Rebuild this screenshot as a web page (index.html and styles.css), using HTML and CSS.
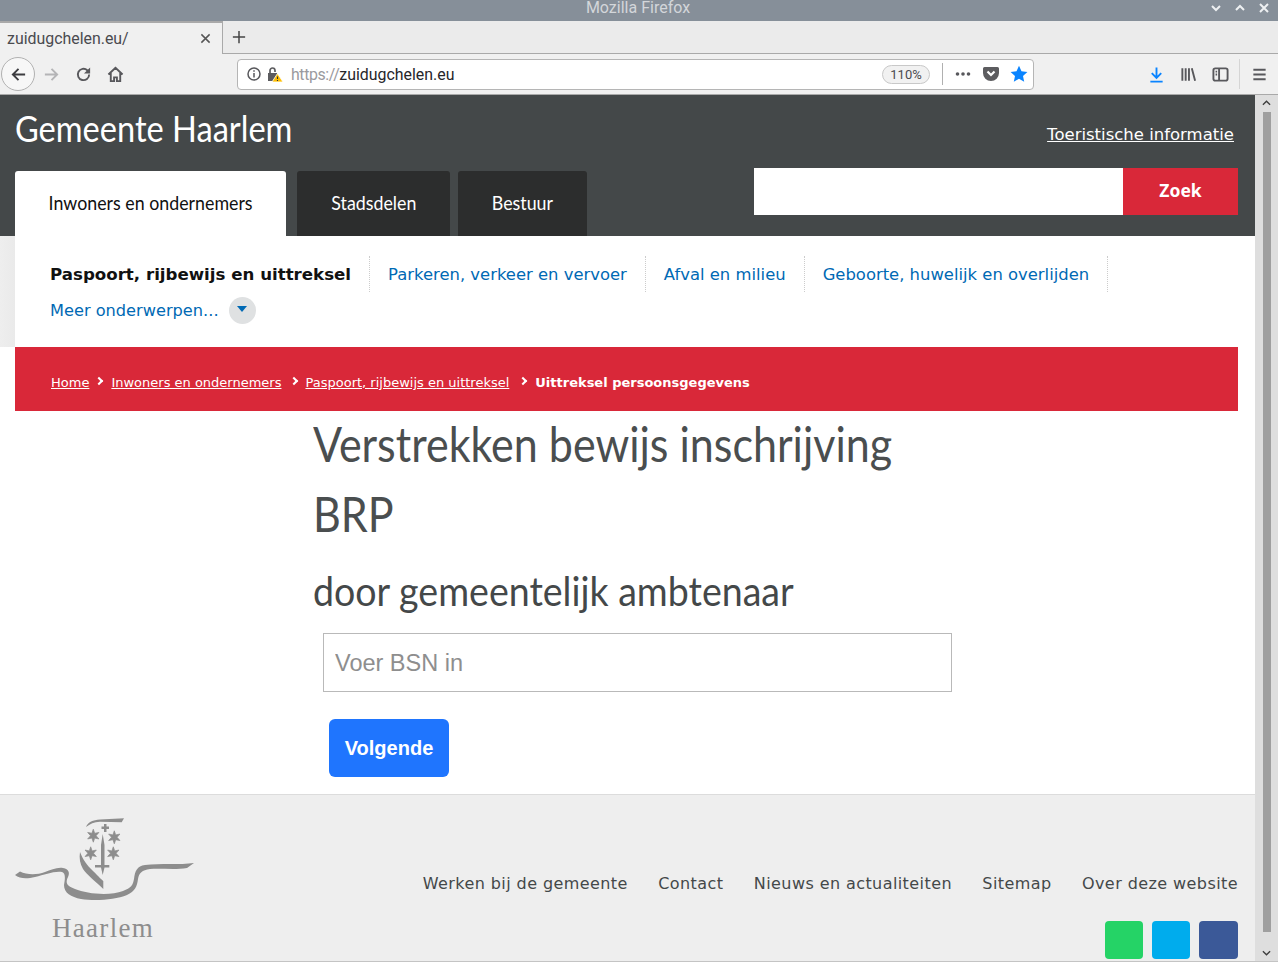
FILE: index.html
```html
<!DOCTYPE html>
<html lang="nl">
<head>
<meta charset="utf-8">
<title>Gemeente Haarlem</title>
<link rel="stylesheet" href="styles.css">
</head>
<body>
<div class="window">
  <div class="titlebar">
    <span class="titlebar-text">Mozilla Firefox</span>
    <div class="wm-buttons">
      <svg class="wm-icon" viewBox="0 0 12 12"><path d="M2 4l4 4 4-4"/></svg>
      <svg class="wm-icon" viewBox="0 0 12 12"><path d="M2 8l4-4 4 4"/></svg>
      <svg class="wm-icon" viewBox="0 0 12 12"><path d="M2 2l8 8M10 2l-8 8"/></svg>
    </div>
  </div>
  <div class="tabbar">
    <div class="tab">
      <span class="tab-title">zuidugchelen.eu/</span>
      <svg class="tab-close" viewBox="0 0 12 12"><path d="M1.500 1.500l9 9M10.500 1.500l-9 9"/></svg>
    </div>
    <svg class="newtab" viewBox="0 0 16 16"><path d="M8 1v14M1 8h14"/></svg>
  </div>
  <div class="navbar">
    <div class="back-btn">
      <svg class="tb-icon dark" viewBox="0 0 18 18"><path d="M16 9H3M9 3L3 9l6 6"/></svg>
    </div>
    <div class="slot"><svg class="tb-icon muted" viewBox="0 0 18 18"><path d="M2 9h13M9 3l6 6-6 6"/></svg></div>
    <div class="slot"><svg class="tb-icon gray" viewBox="0 0 18 18"><path d="M15 9a6 6 0 1 1-2-4.500L15 6"/><path class="fill" d="M16 1.500V8H9.500z"/></svg></div>
    <div class="slot"><svg class="tb-icon gray" viewBox="0 0 18 18"><path d="M1.500 9L9 2l7.500 7M4 7.500V16h3.500v-4h3v4H14V7.500"/></svg></div>
    <div class="urlbar">
      <svg class="info-icon" viewBox="0 0 14 14"><circle cx="7" cy="7" r="6"/><path d="M7 6v4.500M7 3.200v1.600"/></svg>
      <svg class="lock-icon" viewBox="0 0 16 16"><path class="lock-body" d="M1 7h9v8H1z"/><path class="lock-arc" d="M3 7V4.500a2.500 2.500 0 0 1 5 0V6"/><path class="warn" d="M10.500 7.500L16 16H5z"/><path class="warn-mark" d="M10.500 10.500v2.500M10.500 14v1"/></svg>
      <span class="url"><span class="url-scheme">https://</span>zuidugchelen.eu</span>
      <span class="zoom-pill">110%</span>
      <span class="url-sep"></span>
      <svg class="dots" viewBox="0 0 16 4"><circle cx="2.500" cy="2" r="1.800"/><circle cx="8" cy="2" r="1.800"/><circle cx="13.500" cy="2" r="1.800"/></svg>
      <svg class="pocket" viewBox="0 0 16 16"><path class="pocket-body" d="M1.500 1h13A1.500 1.500 0 0 1 16 2.500V7a8 8 0 0 1-16 0V2.500A1.500 1.500 0 0 1 1.500 1z"/><path class="pocket-mark" d="M4.500 5.500L8 9l3.500-3.500"/></svg>
      <svg class="star" viewBox="0 0 18 18"><path d="M9 .8l2.500 5.400 5.900.7-4.400 4 1.200 5.800L9 13.800l-5.200 2.900L5 10.900.6 6.900l5.900-.7z"/></svg>
    </div>
    <div class="slot download-slot"><svg class="tb-icon blue" viewBox="0 0 18 18"><path d="M9 1.500V12M4 7.500L9 12.500l5-5M2.500 16.500h13"/></svg></div>
    <div class="slot"><svg class="tb-icon gray" viewBox="0 0 18 18"><path d="M2.500 2.500v13M6 2.500v13M9.500 2.500v13M12.500 2.500l3.500 13"/></svg></div>
    <div class="slot"><svg class="tb-icon gray" viewBox="0 0 18 18"><rect x="1.500" y="2.500" width="15" height="13" rx="2"/><path d="M7.500 2.500v13M3.800 6h1.600M3.800 9h1.600"/></svg></div>
    <span class="nav-sep"></span>
    <div class="slot"><svg class="tb-icon gray" viewBox="0 0 18 18"><path d="M2.500 4h13M2.500 9h13M2.500 14h13"/></svg></div>
  </div>

  <div class="viewport">
    <div class="page">
      <header class="site-header">
        <div class="header-left">
          <div class="site-title">Gemeente Haarlem</div>
          <nav class="main-tabs">
            <a class="main-tab active tab-a"><span class="tab-label">Inwoners en ondernemers</span></a>
            <a class="main-tab tab-b"><span class="tab-label">Stadsdelen</span></a>
            <a class="main-tab tab-c"><span class="tab-label">Bestuur</span></a>
          </nav>
        </div>
        <div class="header-right">
          <a class="tourist-link">Toeristische informatie</a>
          <div class="search">
            <div class="search-input"></div>
            <div class="search-btn">Zoek</div>
          </div>
        </div>
      </header>

      <div class="subnav-wrap">
        <nav class="subnav">
          <a class="subnav-item current">Paspoort, rijbewijs en uittreksel</a>
          <a class="subnav-item">Parkeren, verkeer en vervoer</a>
          <a class="subnav-item">Afval en milieu</a>
          <a class="subnav-item">Geboorte, huwelijk en overlijden</a>
          <a class="subnav-more">Meer onderwerpen...<span class="more-circle"><span class="more-caret"></span></span></a>
        </nav>
      </div>

      <div class="breadcrumb-wrap">
        <div class="breadcrumb">
          <a class="crumb">Home</a><span class="crumb-sep c1"></span>
          <a class="crumb">Inwoners en ondernemers</a><span class="crumb-sep c2"></span>
          <a class="crumb">Paspoort, rijbewijs en uittreksel</a><span class="crumb-sep c3"></span>
          <strong class="crumb-current">Uittreksel persoonsgegevens</strong>
        </div>
      </div>

      <main class="content">
        <h1 class="page-title">Verstrekken bewijs inschrijving<br>BRP</h1>
        <h2 class="page-sub">door gemeentelijk ambtenaar</h2>
        <input class="bsn" type="text" placeholder="Voer BSN in">
        <button class="next" type="button">Volgende</button>
      </main>

      <footer class="site-footer">
        <div class="logo">
          <svg class="logo-mark" viewBox="0 0 180 90">
            <defs>
              <polygon id="logo-star" points="0,-6.500 1.400,-2.420 5.630,-3.250 2.800,0 5.630,3.250 1.400,2.420 0,6.500 -1.400,2.420 -5.630,3.250 -2.800,0 -5.630,-3.250 -1.400,-2.420"/>
            </defs>
            <path d="M0 60L5 56.500C12 60 22 60 30 57C36 55 42 52 48 53C54 54 55 58 53 62C50 68 52 71 60 74C72 79 95 81 108 76C116 73 118 70 119 64C120 56 122 51 130 50C145 48 165 50 179 48L172 53C160 55 145 53 135 54C127 55 124 58 123 64C122 72 120 76 112 80C100 85 80 86 66 84C56 82 49 78 49 70C50 65 51 58 47 57C38 56 30 60 20 62C12 64 5 64 0 60z"/>
            <path d="M71 12C73 7 78 5 85 4.500L109 3.300L106.700 7.300L85 6.800C79 7 75 9 71 12z"/>
            <path d="M65 37C68 45 72 50 78 56C84 62 87 65 88.300 66V74C80 66 72 60 68 54C65 49 64 43 65 37z"/>
            <path d="M87.700 19L89.500 30V50H94.300V52.500H89.500L87.700 60L86 52.500H80V50H86V30z"/>
            <path d="M89 9H91.500V11.500H94V14H91.500V17H89V14H86.500V11.500H89z"/>
            <use class="logo-star" href="#logo-star" x="78.300" y="20.700"/>
            <use class="logo-star" href="#logo-star" x="99.300" y="22.300"/>
            <use class="logo-star" href="#logo-star" x="75.700" y="38.300"/>
            <use class="logo-star" href="#logo-star" x="98.300" y="38.300"/>
          </svg>
          <div class="logo-text">Haarlem</div>
        </div>
        <div class="footer-right">
          <nav class="footer-links">
            <a>Werken bij de gemeente</a>
            <a>Contact</a>
            <a>Nieuws en actualiteiten</a>
            <a>Sitemap</a>
            <a>Over deze website</a>
          </nav>
          <div class="socials">
            <span class="social whatsapp"></span>
            <span class="social twitter"></span>
            <span class="social facebook"></span>
          </div>
        </div>
      </footer>
    </div>
    <div class="scrollbar">
      <svg class="sb-arrow" viewBox="0 0 10 6"><path d="M1 5l4-4 4 4"/></svg>
      <div class="sb-thumb"></div>
      <svg class="sb-arrow" viewBox="0 0 10 6"><path d="M1 1l4 4 4-4"/></svg>
    </div>
  </div>
</div>
</body>
</html>
```

FILE: styles.css
```css
* { box-sizing: border-box; }
html, body { margin: 0; padding: 0; height: 100%; overflow: hidden; }
body { font-family: "DejaVu Sans", sans-serif; background: #fff; }
svg { display: block; flex: none; }
a { text-decoration: none; color: inherit; }

.window { display: flex; flex-direction: column; width: 1278px; height: 962px; }

/* Title bar */
.titlebar { height: 21px; flex: none; background: #868f99; display: flex; align-items: center; justify-content: center; position: relative; padding-right: 2px; }
.titlebar-text { font: 16px/16px Roboto, sans-serif; color: #d3d6da; margin-top: -5px; }
.wm-buttons { position: absolute; right: 8px; top: 2px; display: flex; gap: 12px; }
.wm-icon { width: 12px; height: 12px; fill: none; stroke: #eef0f2; stroke-width: 2; }

/* Tabs */
.tabbar { height: 33px; flex: none; background: #ebebeb; display: flex; align-items: center; border-bottom: 1px solid #a9a9a9; }
.tab { width: 223px; height: 33px; align-self: flex-start; background: #f0f0f0; border-top: 2px solid #a9a9a9; border-right: 1px solid #a9a9a9; display: flex; align-items: center; justify-content: space-between; padding: 0 11px 0 7px; }
.tab-title { font: 15.900px/20px Roboto, sans-serif; color: #4a4a4f; }
.tab-close { width: 11px; height: 11px; fill: none; stroke: #555; stroke-width: 1.600; }
.newtab { width: 14px; height: 14px; margin: 0 0 0 9px; fill: none; stroke: #444; stroke-width: 1.700; }

/* Nav bar */
.navbar { height: 41px; flex: none; background: #f0f0f0; border-bottom: 1px solid #a9a9a9; display: flex; align-items: center; }
.back-btn { width: 34px; height: 34px; margin-left: 1px; border: 1px solid #b1b1b1; border-radius: 50%; background: #f7f7f7; display: flex; align-items: center; justify-content: center; }
.slot { width: 32px; height: 32px; display: flex; align-items: center; justify-content: center; }
.tb-icon { width: 17px; height: 17px; fill: none; stroke-width: 2; }
.tb-icon.dark { stroke: #3c3c40; }
.tb-icon.muted { stroke: #b4b4b6; }
.tb-icon.gray { stroke: #58585c; }
.tb-icon.blue { stroke: #0a84ff; }
.tb-icon .fill { fill: #58585c; stroke: none; }
.urlbar { width: 797px; height: 31px; margin-left: 106px; background: #fff; border: 1px solid #b5b5b5; border-radius: 4px; display: flex; align-items: center; padding-left: 9px; }
.info-icon { width: 14px; height: 14px; fill: none; stroke: #58585c; stroke-width: 1.500; }
.lock-icon { width: 16px; height: 16px; margin-left: 6px; fill: none; }
.lock-body { fill: #5c5c5f; }
.lock-arc { stroke: #5c5c5f; stroke-width: 1.700; }
.warn { fill: #ffbf00; stroke: #fff; stroke-width: .8; }
.warn-mark { stroke: #333; stroke-width: 1.100; }
.url { font: 15.900px/22px Roboto, sans-serif; color: #26262a; margin-left: 8px; width: 591px; padding-top: 1px; white-space: nowrap; }
.url-scheme { color: #9a9a9e; letter-spacing: -.4px; }
.zoom-pill { width: 48px; height: 19px; border: 1px solid #c8c8c8; border-radius: 10px; background: #f1f1f1; font: 13px/17px Roboto, sans-serif; color: #4a4a4f; text-align: center; }
.url-sep { width: 1px; height: 22px; background: #b0b0b0; margin-left: 12px; }
.dots { width: 16px; height: 4px; margin-left: 12px; fill: #58585c; }
.pocket { width: 16px; height: 16px; margin-left: 12px; }
.pocket-body { fill: #5c5c5f; }
.pocket-mark { fill: none; stroke: #fff; stroke-width: 2.200; }
.star { width: 18px; height: 18px; margin-left: 11px; fill: #0a84ff; }
.download-slot { margin-left: 106px; }
.nav-sep { width: 1px; height: 30px; background: #d5d5d5; margin: 0 3px; }

/* Viewport */
.viewport { flex: 1; display: flex; min-height: 0; border-bottom: 1px solid #c4c4c4; }
.page { flex: 1; min-width: 0; display: flex; flex-direction: column; overflow: hidden; background: #fff; }
.scrollbar { width: 23px; flex: none; background: #dedede; display: flex; flex-direction: column; align-items: center; }
.sb-arrow { width: 9px; height: 6px; margin: 5px 0; fill: none; stroke: #3d3d3d; stroke-width: 1.500; }
.sb-thumb { width: 8px; flex: 1; background: #9f9f9f; margin: 1px 0 13px; }

/* Header */
.site-header { height: 141px; flex: none; background: #444849; display: flex; justify-content: space-between; padding: 0 17px 0 15px; }
.header-left { display: flex; flex-direction: column; }
.site-title { height: 76px; font: 36px/66px Lato, sans-serif; color: #fff; white-space: nowrap; transform: scaleX(.905); transform-origin: left center; }
.main-tabs { display: flex; height: 65px; }
.main-tab { display: flex; align-items: center; justify-content: center; padding-bottom: 4px; border-radius: 3px 3px 0 0; font: 20px/24px Lato, sans-serif; color: #fff; background: #2c2d2d; white-space: nowrap; }
.tab-label { transform: scaleX(.89); }
.main-tab.active { background: #fff; color: #111; }
.tab-a { width: 271px; }
.tab-b { width: 153px; margin-left: 11px; }
.tab-c { width: 129px; margin-left: 8px; }
.header-right { display: flex; flex-direction: column; align-items: flex-end; padding-top: 28px; }
.tourist-link { font-size: 16.500px; line-height: 24px; color: #fff; text-decoration: underline; margin-right: 4px; }
.search { display: flex; width: 484px; height: 47px; margin-top: 21px; }
.search-input { flex: 1; background: #fff; }
.search-btn { width: 115px; background: #d92839; color: #fff; font: bold 17.500px/45px "Noto Sans", sans-serif; text-align: center; }

/* Sub nav */
.subnav-wrap { height: 111px; flex: none; padding-left: 15px; background: linear-gradient(90deg, #eee 0, #eaeaea 15px, #fff 15px); }
.subnav { display: flex; flex-wrap: wrap; align-content: flex-start; padding: 20px 0 0 35px; height: 111px; }
.subnav-item { height: 36px; line-height: 38px; font-size: 16.420px; color: #0069b4; padding: 0 18px; border-right: 1px dotted #ccc; white-space: nowrap; }
.subnav-item.current { font-weight: bold; font-size: 16.650px; color: #111; padding-left: 0; }
.subnav-more { width: 100%; height: 36px; display: flex; align-items: center; font-size: 16.200px; color: #0069b4; }
.more-circle { width: 27px; height: 27px; margin-left: 10px; border-radius: 50%; background: #dfe1e2; display: flex; align-items: center; justify-content: center; }
.more-caret { width: 0; height: 0; border: 5px solid transparent; border-top: 6px solid #0069b4; border-bottom: 0; margin-top: -2px; }

/* Breadcrumb */
.breadcrumb-wrap { height: 64px; flex: none; padding: 0 17px 0 15px; }
.breadcrumb { height: 64px; background: #d92839; padding: 7px 36px 0; display: flex; align-items: center; font-size: 13px; color: #fff; }
.crumb { text-decoration: underline; white-space: nowrap; }
.crumb-sep { width: 6px; height: 6px; border-top: 2px solid #fff; border-right: 2px solid #fff; transform: rotate(45deg); }
.c1 { margin: -4px 9px 0 7px; }
.c2 { margin: -4px 8px 0 10px; }
.c3 { margin: -4px 9px 0 11px; }
.crumb-current { font-weight: bold; white-space: nowrap; }

/* Content */
.content { flex: 1; min-height: 0; display: flex; flex-direction: column; align-items: flex-start; padding-left: 313px; }
.page-title { margin: -2px 0 0; font: 400 48px/70px Lato, sans-serif; color: #4a4e4f; white-space: nowrap; transform: scaleX(.896); transform-origin: left center; }
.page-sub { margin: 12px 0 0; font: 400 41px/60px Lato, sans-serif; color: #444849; white-space: nowrap; transform: scaleX(.916); transform-origin: left center; }
.bsn { width: 629px; height: 59px; margin: 12px 0 0 10px; padding: 2px 11px 0; border: 1px solid #b9b9b9; font: 23.500px "Liberation Sans", sans-serif; background: #fff; outline: 0; border-radius: 0; }
.bsn::placeholder { color: #8e8e8e; opacity: 1; }
.next { width: 120px; height: 58px; margin: 27px 0 0 16px; border: 0; border-radius: 6px; background: #1f75fe; color: #fff; font: bold 20px "Liberation Sans", sans-serif; padding: 0; }

/* Footer */
.site-footer { height: 167px; flex: none; background: #eee; border-top: 1px solid #dcdcdc; display: flex; justify-content: space-between; padding: 0 17px 0 15px; }
.logo { width: 180px; padding-top: 20px; }
.logo-mark { width: 180px; height: 90px; fill: #8d8d8d; }
.logo-star { stroke: #8d8d8d; stroke-width: .7; }
.logo-text { font: 27px/30px "Liberation Serif", serif; color: #8d8d8d; margin: 8px 0 0 37px; letter-spacing: 1.300px; }
.footer-right { display: flex; flex-direction: column; align-items: flex-end; padding-top: 77px; }
.footer-links { display: flex; gap: 30.400px; font-size: 16px; letter-spacing: .42px; line-height: 24px; color: #444849; white-space: nowrap; }
.socials { display: flex; gap: 9px; margin-top: 25px; }
.social { width: 38px; height: 38px; border-radius: 4px; }
.social.facebook { width: 39px; background: #3b5998; }
.social.whatsapp { background: #25d366; }
.social.twitter { background: #00aced; }
```
